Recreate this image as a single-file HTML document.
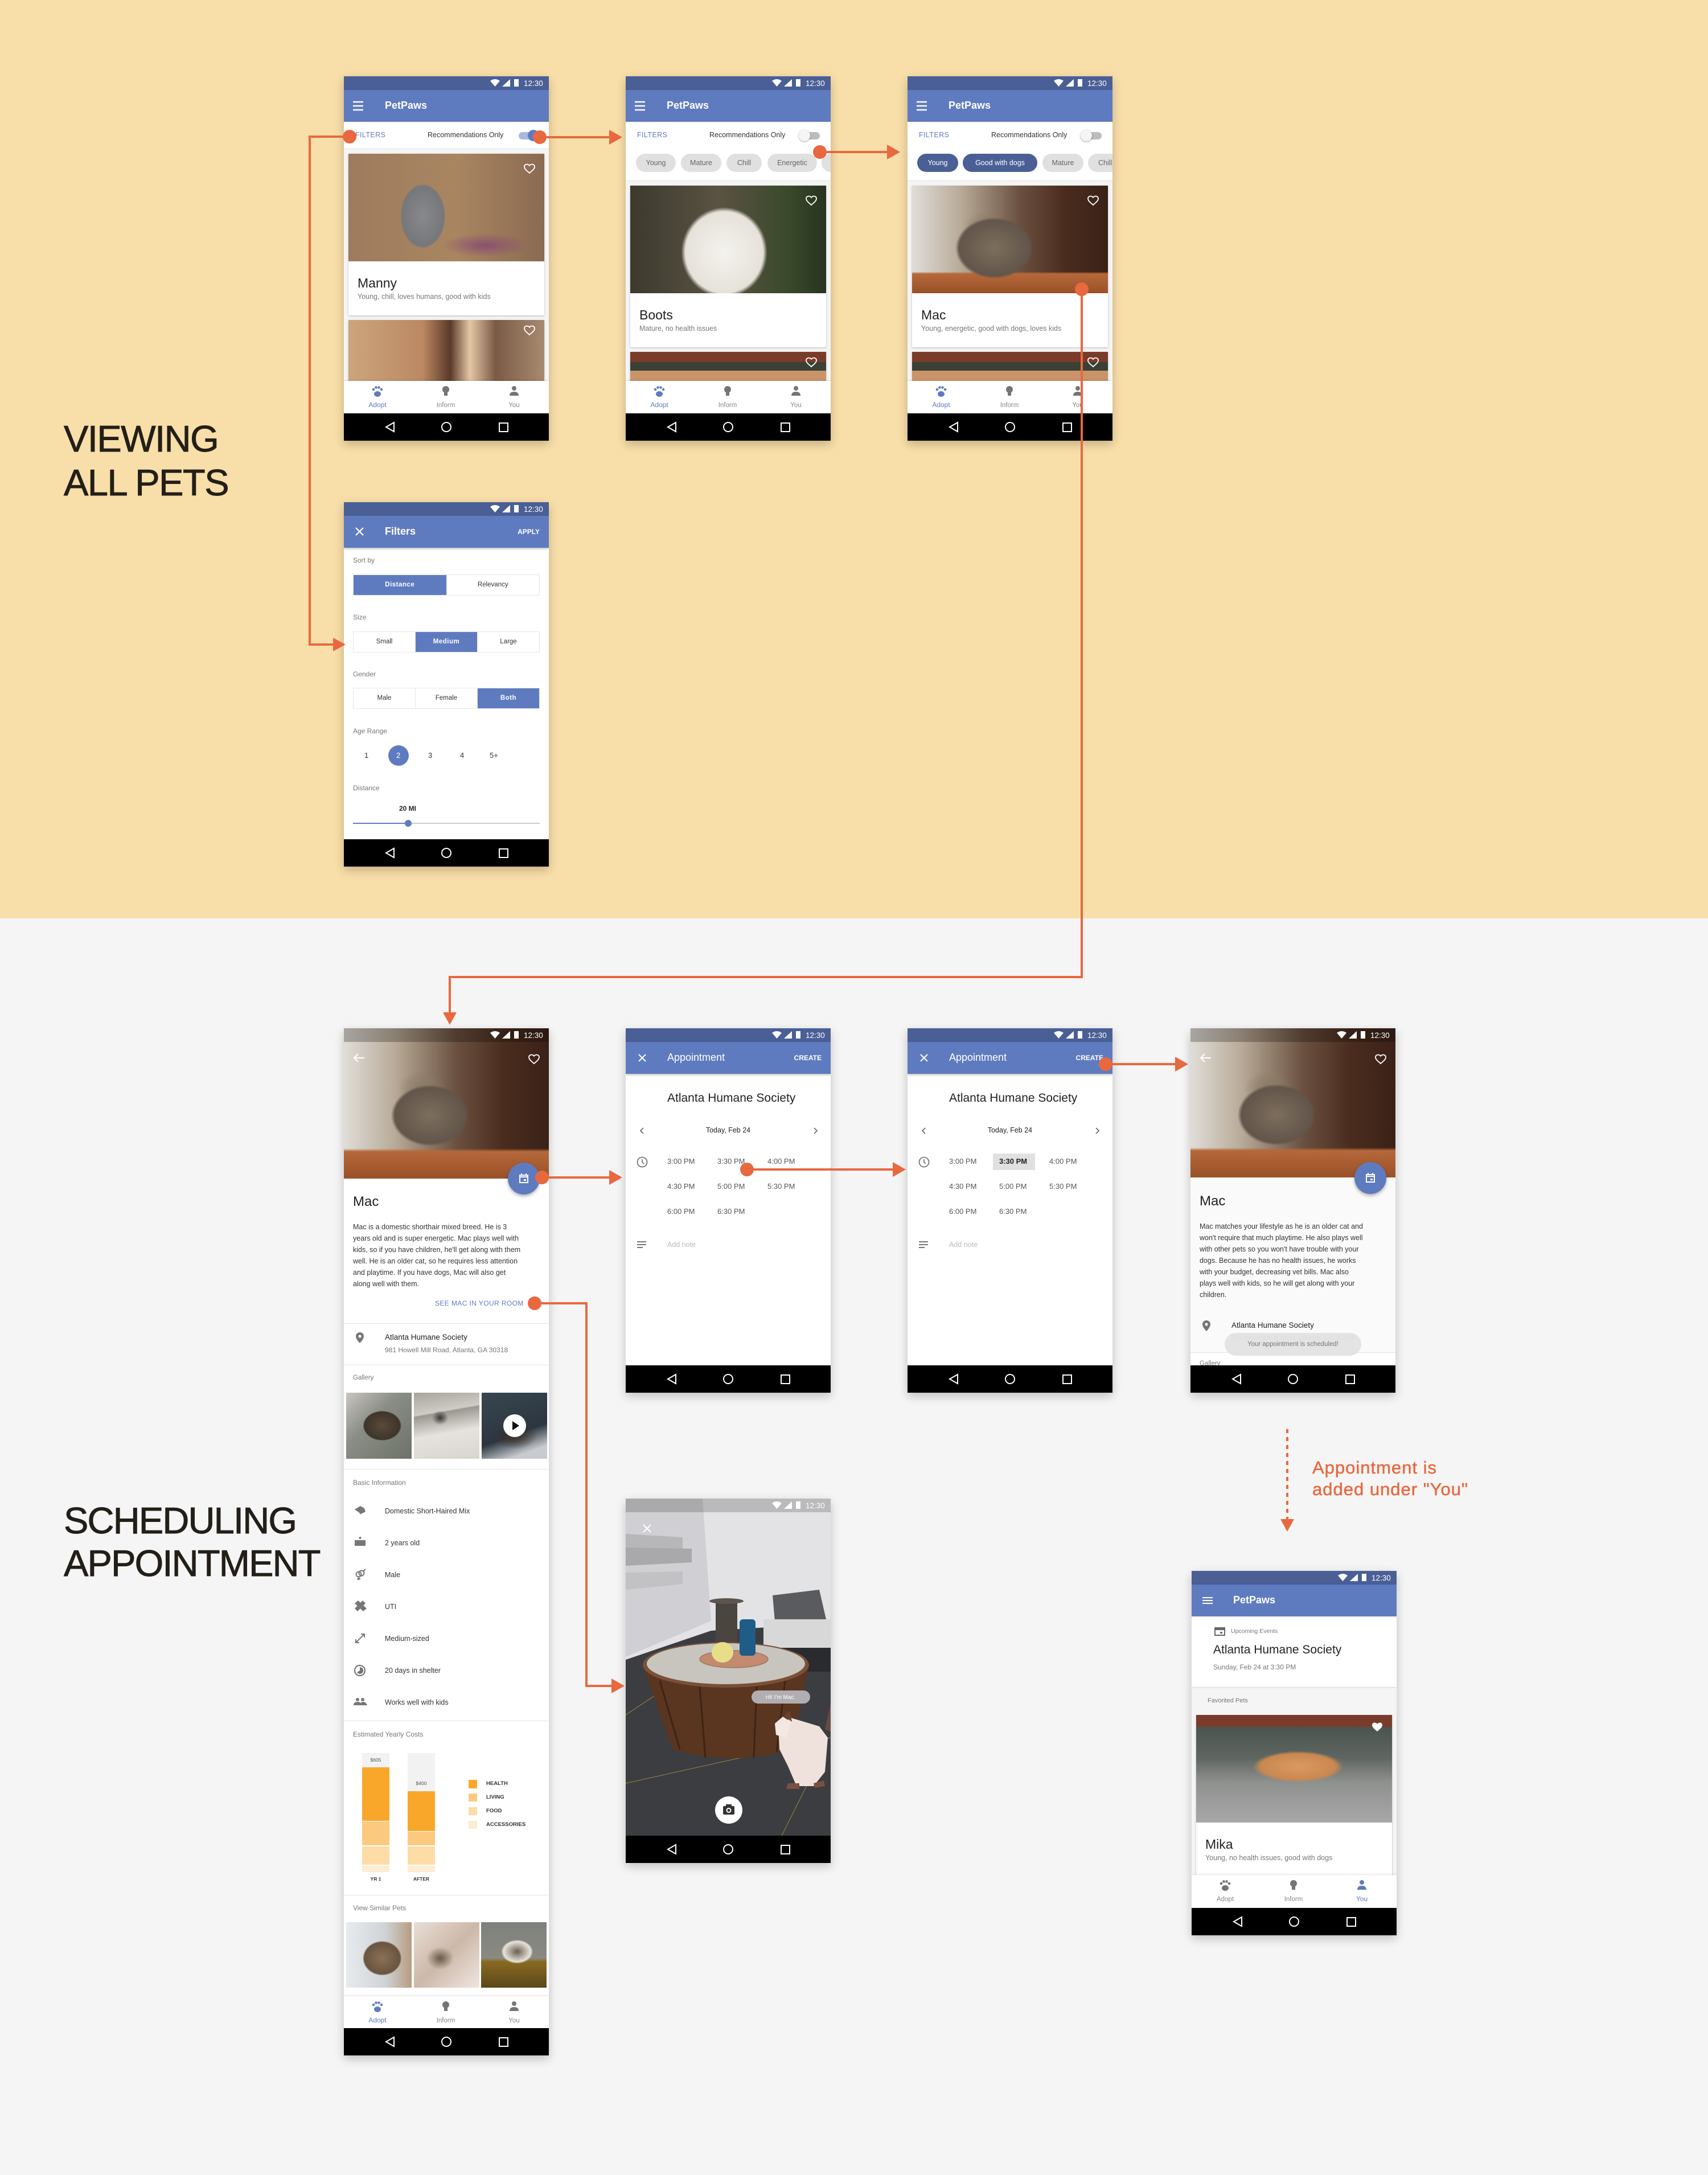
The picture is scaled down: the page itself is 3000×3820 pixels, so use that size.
<!DOCTYPE html>
<html><head><meta charset="utf-8">
<style>
*{box-sizing:border-box;margin:0;padding:0}
body{width:3000px;height:3820px;position:relative;background:#f5f5f5;font-family:"Liberation Sans",sans-serif;overflow:hidden}
.a{position:absolute;white-space:nowrap}
.ph{position:absolute;width:360px;background:#fff;overflow:hidden;box-shadow:0 6px 16px rgba(0,0,0,.22)}
.sb{position:absolute;left:0;top:0;width:360px;height:24px;background:#4a5f96}
.ab{position:absolute;left:0;top:24px;width:360px;height:56px;background:#5f7bc0;box-shadow:0 2px 4px rgba(0,0,0,.25);color:#fff}
.nb{position:absolute;left:0;bottom:0;width:360px;height:48px;background:#000}
.bn{position:absolute;left:0;width:360px;height:56px;background:#fff;box-shadow:0 -1px 3px rgba(0,0,0,.12)}
.card{position:absolute;left:8px;width:344px;background:#fff;box-shadow:0 1px 3px rgba(0,0,0,.25);overflow:hidden}
.chip{position:absolute;top:136px;height:32px;line-height:32px;border-radius:16px;background:#e0e0e0;color:#666;font-size:12.5px;text-align:center}
.chip.on{background:#4a5f96;color:#fff}
.lbl{font-size:12px;color:#777}
.seg{position:absolute;left:16px;width:328px;height:37px;border:1px solid #e6e6e6;display:flex}
.seg div{flex:1;text-align:center;line-height:35px;font-size:11.5px;color:#333;border-right:1px solid #e6e6e6}
.seg div.on{background:#5f7bc0;color:#fff;font-weight:bold;letter-spacing:.5px}
.div{position:absolute;left:0;width:360px;height:1px;background:#e3e3e3}
.mac{background:radial-gradient(ellipse 95px 75px at 42% 58%,#7d6e5c 0%,#62554a 65%,transparent 72%),radial-gradient(ellipse 60px 45px at 38% 40%,#8a7a66,transparent 70%),linear-gradient(0deg,#9a5128 0%,#b5683a 18%,transparent 20%),linear-gradient(90deg,#e0ddd8 0%,#b8aa98 25%,#6a5040 55%,#4a2c1e 78%,#3a2217 100%)}
.t{font-size:12.5px;color:#333}
</style></head><body>
<div class="a" style="left:0;top:0;width:3000px;height:1613px;background:#f8dea8"></div>

<div class="a" style="left:112px;top:732px;font-size:65px;line-height:77px;letter-spacing:-1.5px;color:#231f18;-webkit-text-stroke:.9px #231f18">VIEWING<br>ALL PETS</div>
<div class="a" style="left:112px;top:2633px;font-size:65px;line-height:75px;letter-spacing:-1.8px;color:#231f18;-webkit-text-stroke:.9px #231f18">SCHEDULING<br>APPOINTMENT</div>
<div class="a" style="left:2305px;top:2559px;font-size:31px;line-height:38px;letter-spacing:1px;color:#e8683f;-webkit-text-stroke:.5px #e8683f">Appointment is<br>added under "You"</div>

<!-- P1 -->
<div class="ph" style="left:604px;top:134px;height:640px;background:#f5f5f5">
 <div class="sb"><svg width="360" height="24"><path d="M257 8 Q265.5 2 274 8 L265.5 18Z" fill="#fff"/><path d="M278 18 L292 18 L292 5Z" fill="#fff"/><rect x="299" y="5" width="8" height="13" fill="#fff"/><text x="316" y="17" font-size="13.5" fill="#fff" font-family="Liberation Sans">12:30</text></svg></div>
 <div class="ab"><svg class="a" style="left:0;top:0" width="60" height="56"><path d="M16 21h18M16 28h18M16 35h18" stroke="#fff" stroke-width="2.5"/></svg><div class="a" style="left:72px;top:17px;font-size:18px;font-weight:bold">PetPaws</div></div>
 <div class="a" style="left:0;top:80px;width:360px;height:48px;background:#fff;border-bottom:1px solid #e0e0e0"></div>
 <div class="a" style="left:20px;top:96px;font-size:12.5px;color:#5f7bc0;letter-spacing:.4px">FILTERS</div>
 <div class="a" style="left:147px;top:96px;font-size:12.5px;color:#333">Recommendations Only</div>
 <div class="a" style="left:307px;top:98px;width:32px;height:13px;border-radius:7px;background:#a9b8df"></div>
 <div class="a" style="left:323px;top:94px;width:20px;height:20px;border-radius:10px;background:#5f7bc0"></div>
 <div class="card" style="top:136px;height:284px">
  <div style="height:189px;background:radial-gradient(ellipse 62px 88px at 38% 58%,#88898d 0%,#76777b 60%,transparent 64%),radial-gradient(ellipse 110px 30px at 70% 85%,#8a5070,transparent 70%),linear-gradient(90deg,#9d7b5e,#a98660 55%,#8a6a52)"></div>
  <div class="a" style="left:16px;top:214px;font-size:23px;color:#222">Manny</div>
  <div class="a" style="left:16px;top:244px;font-size:12.5px;color:#777">Young, chill, loves humans, good with kids</div>
  <svg class="a" style="left:306px;top:14px" width="24" height="24" viewBox="0 0 24 24"><path d="M12 20l-1.4-1.3C5.4 14.4 3 12 3 8.8 3 6.2 5 4.5 7.4 4.5c1.7 0 3.5.9 4.6 2.3 1.1-1.4 2.9-2.3 4.6-2.3C19 4.5 21 6.2 21 8.8c0 3.2-2.4 5.6-7.6 9.9z" fill="none" stroke="#fff" stroke-width="1.8"/></svg>
 </div>
 <div class="card" style="top:428px;height:120px">
  <div style="height:120px;background:linear-gradient(90deg,#cca57c,#bb8862 38%,#5a3a2a 52%,#e4c7a4 62%,#7a5a46 75%,#a88a70)"></div>
  <svg class="a" style="left:306px;top:6px" width="24" height="24" viewBox="0 0 24 24"><path d="M12 20l-1.4-1.3C5.4 14.4 3 12 3 8.8 3 6.2 5 4.5 7.4 4.5c1.7 0 3.5.9 4.6 2.3 1.1-1.4 2.9-2.3 4.6-2.3C19 4.5 21 6.2 21 8.8c0 3.2-2.4 5.6-7.6 9.9z" fill="none" stroke="#fff" stroke-width="1.8"/></svg>
 </div>
 <div class="bn" style="top:535px"><svg width="360" height="56" font-family="Liberation Sans"><g fill="#5f7bc0"><ellipse cx="59" cy="23" rx="6" ry="5"/><circle cx="52" cy="15" r="2.3"/><circle cx="56.5" cy="11.5" r="2.3"/><circle cx="61.5" cy="11.5" r="2.3"/><circle cx="66" cy="15" r="2.3"/></g><text x="59" y="46" text-anchor="middle" font-size="12" fill="#5f7bc0">Adopt</text><g fill="#757575"><circle cx="179" cy="15" r="6"/><rect x="176" y="19" width="6" height="7"/><circle cx="299" cy="13" r="4"/><path d="M291 26q0-7 8-7q8 0 8 7z"/></g><text x="179" y="46" text-anchor="middle" font-size="11.5" fill="#888">Inform</text><text x="299" y="46" text-anchor="middle" font-size="11.5" fill="#888">You</text></svg></div>
 <div class="nb"><svg width="360" height="48"><path d="M88 16L74 24L88 32Z" stroke="#fff" stroke-width="2" fill="none"/><circle cx="180" cy="24" r="8" stroke="#fff" stroke-width="2" fill="none"/><rect x="273" y="17" width="15" height="15" stroke="#fff" stroke-width="2" fill="none"/></svg></div>
</div>

<!-- P2 -->
<div class="ph" style="left:1099px;top:134px;height:640px;background:#f5f5f5">
 <div class="sb"><svg width="360" height="24"><path d="M257 8 Q265.5 2 274 8 L265.5 18Z" fill="#fff"/><path d="M278 18 L292 18 L292 5Z" fill="#fff"/><rect x="299" y="5" width="8" height="13" fill="#fff"/><text x="316" y="17" font-size="13.5" fill="#fff" font-family="Liberation Sans">12:30</text></svg></div>
 <div class="ab"><svg class="a" style="left:0;top:0" width="60" height="56"><path d="M16 21h18M16 28h18M16 35h18" stroke="#fff" stroke-width="2.5"/></svg><div class="a" style="left:72px;top:17px;font-size:18px;font-weight:bold">PetPaws</div></div>
 <div class="a" style="left:0;top:80px;width:360px;height:104px;background:#fff;border-bottom:1px solid #e0e0e0"></div>
 <div class="a" style="left:20px;top:96px;font-size:12.5px;color:#5f7bc0;letter-spacing:.4px">FILTERS</div>
 <div class="a" style="left:147px;top:96px;font-size:12.5px;color:#333">Recommendations Only</div>
 <div class="a" style="left:309px;top:98px;width:32px;height:13px;border-radius:7px;background:#bdbdbd"></div>
 <div class="a" style="left:304px;top:94px;width:20px;height:20px;border-radius:10px;background:#f5f5f5;box-shadow:0 1px 3px rgba(0,0,0,.35)"></div>
 <div class="chip" style="left:18px;width:70px">Young</div>
 <div class="chip" style="left:97px;width:71px">Mature</div>
 <div class="chip" style="left:177px;width:62px">Chill</div>
 <div class="chip" style="left:249px;width:87px">Energetic</div>
 <div class="chip" style="left:344px;width:70px"></div>
 <div class="card" style="top:192px;height:284px">
  <div style="height:189px;background:radial-gradient(ellipse 105px 110px at 48% 62%,#f4f2ee 0%,#e6e2da 65%,transparent 72%),linear-gradient(90deg,#3c3a2e,#5a5242 45%,#3a4a2c 80%,#283420)"></div>
  <div class="a" style="left:16px;top:214px;font-size:23px;color:#222">Boots</div>
  <div class="a" style="left:16px;top:244px;font-size:12.5px;color:#777">Mature, no health issues</div>
  <svg class="a" style="left:306px;top:14px" width="24" height="24" viewBox="0 0 24 24"><path d="M12 20l-1.4-1.3C5.4 14.4 3 12 3 8.8 3 6.2 5 4.5 7.4 4.5c1.7 0 3.5.9 4.6 2.3 1.1-1.4 2.9-2.3 4.6-2.3C19 4.5 21 6.2 21 8.8c0 3.2-2.4 5.6-7.6 9.9z" fill="none" stroke="#fff" stroke-width="1.8"/></svg>
 </div>
 <div class="card" style="top:484px;height:60px">
  <div style="height:60px;background:linear-gradient(180deg,#7a3b2a 0,#7a3b2a 30%,#3a4034 30%,#3a4034 55%,#c9946a 55%)"></div>
  <svg class="a" style="left:306px;top:6px" width="24" height="24" viewBox="0 0 24 24"><path d="M12 20l-1.4-1.3C5.4 14.4 3 12 3 8.8 3 6.2 5 4.5 7.4 4.5c1.7 0 3.5.9 4.6 2.3 1.1-1.4 2.9-2.3 4.6-2.3C19 4.5 21 6.2 21 8.8c0 3.2-2.4 5.6-7.6 9.9z" fill="none" stroke="#fff" stroke-width="1.8"/></svg>
 </div>
 <div class="bn" style="top:535px"><svg width="360" height="56" font-family="Liberation Sans"><g fill="#5f7bc0"><ellipse cx="59" cy="23" rx="6" ry="5"/><circle cx="52" cy="15" r="2.3"/><circle cx="56.5" cy="11.5" r="2.3"/><circle cx="61.5" cy="11.5" r="2.3"/><circle cx="66" cy="15" r="2.3"/></g><text x="59" y="46" text-anchor="middle" font-size="12" fill="#5f7bc0">Adopt</text><g fill="#757575"><circle cx="179" cy="15" r="6"/><rect x="176" y="19" width="6" height="7"/><circle cx="299" cy="13" r="4"/><path d="M291 26q0-7 8-7q8 0 8 7z"/></g><text x="179" y="46" text-anchor="middle" font-size="11.5" fill="#888">Inform</text><text x="299" y="46" text-anchor="middle" font-size="11.5" fill="#888">You</text></svg></div>
 <div class="nb"><svg width="360" height="48"><path d="M88 16L74 24L88 32Z" stroke="#fff" stroke-width="2" fill="none"/><circle cx="180" cy="24" r="8" stroke="#fff" stroke-width="2" fill="none"/><rect x="273" y="17" width="15" height="15" stroke="#fff" stroke-width="2" fill="none"/></svg></div>
</div>

<!-- P3 -->
<div class="ph" style="left:1594px;top:134px;height:640px;background:#f5f5f5">
 <div class="sb"><svg width="360" height="24"><path d="M257 8 Q265.5 2 274 8 L265.5 18Z" fill="#fff"/><path d="M278 18 L292 18 L292 5Z" fill="#fff"/><rect x="299" y="5" width="8" height="13" fill="#fff"/><text x="316" y="17" font-size="13.5" fill="#fff" font-family="Liberation Sans">12:30</text></svg></div>
 <div class="ab"><svg class="a" style="left:0;top:0" width="60" height="56"><path d="M16 21h18M16 28h18M16 35h18" stroke="#fff" stroke-width="2.5"/></svg><div class="a" style="left:72px;top:17px;font-size:18px;font-weight:bold">PetPaws</div></div>
 <div class="a" style="left:0;top:80px;width:360px;height:104px;background:#fff;border-bottom:1px solid #e0e0e0"></div>
 <div class="a" style="left:20px;top:96px;font-size:12.5px;color:#5f7bc0;letter-spacing:.4px">FILTERS</div>
 <div class="a" style="left:147px;top:96px;font-size:12.5px;color:#333">Recommendations Only</div>
 <div class="a" style="left:309px;top:98px;width:32px;height:13px;border-radius:7px;background:#bdbdbd"></div>
 <div class="a" style="left:304px;top:94px;width:20px;height:20px;border-radius:10px;background:#f5f5f5;box-shadow:0 1px 3px rgba(0,0,0,.35)"></div>
 <div class="chip on" style="left:17px;width:72px">Young</div>
 <div class="chip on" style="left:97px;width:131px">Good with dogs</div>
 <div class="chip" style="left:237px;width:72px">Mature</div>
 <div class="chip" style="left:317px;width:62px;text-align:left;padding-left:18px">Chill</div>
 <div class="card" style="top:192px;height:284px">
  <div class="mac" style="height:189px"></div>
  <div class="a" style="left:16px;top:214px;font-size:23px;color:#222">Mac</div>
  <div class="a" style="left:16px;top:244px;font-size:12.5px;color:#777">Young, energetic, good with dogs, loves kids</div>
  <svg class="a" style="left:306px;top:14px" width="24" height="24" viewBox="0 0 24 24"><path d="M12 20l-1.4-1.3C5.4 14.4 3 12 3 8.8 3 6.2 5 4.5 7.4 4.5c1.7 0 3.5.9 4.6 2.3 1.1-1.4 2.9-2.3 4.6-2.3C19 4.5 21 6.2 21 8.8c0 3.2-2.4 5.6-7.6 9.9z" fill="none" stroke="#fff" stroke-width="1.8"/></svg>
 </div>
 <div class="card" style="top:484px;height:60px">
  <div style="height:60px;background:linear-gradient(180deg,#7a3b2a 0,#7a3b2a 30%,#3a4034 30%,#3a4034 55%,#c9946a 55%)"></div>
  <svg class="a" style="left:306px;top:6px" width="24" height="24" viewBox="0 0 24 24"><path d="M12 20l-1.4-1.3C5.4 14.4 3 12 3 8.8 3 6.2 5 4.5 7.4 4.5c1.7 0 3.5.9 4.6 2.3 1.1-1.4 2.9-2.3 4.6-2.3C19 4.5 21 6.2 21 8.8c0 3.2-2.4 5.6-7.6 9.9z" fill="none" stroke="#fff" stroke-width="1.8"/></svg>
 </div>
 <div class="bn" style="top:535px"><svg width="360" height="56" font-family="Liberation Sans"><g fill="#5f7bc0"><ellipse cx="59" cy="23" rx="6" ry="5"/><circle cx="52" cy="15" r="2.3"/><circle cx="56.5" cy="11.5" r="2.3"/><circle cx="61.5" cy="11.5" r="2.3"/><circle cx="66" cy="15" r="2.3"/></g><text x="59" y="46" text-anchor="middle" font-size="12" fill="#5f7bc0">Adopt</text><g fill="#757575"><circle cx="179" cy="15" r="6"/><rect x="176" y="19" width="6" height="7"/><circle cx="299" cy="13" r="4"/><path d="M291 26q0-7 8-7q8 0 8 7z"/></g><text x="179" y="46" text-anchor="middle" font-size="11.5" fill="#888">Inform</text><text x="299" y="46" text-anchor="middle" font-size="11.5" fill="#888">You</text></svg></div>
 <div class="nb"><svg width="360" height="48"><path d="M88 16L74 24L88 32Z" stroke="#fff" stroke-width="2" fill="none"/><circle cx="180" cy="24" r="8" stroke="#fff" stroke-width="2" fill="none"/><rect x="273" y="17" width="15" height="15" stroke="#fff" stroke-width="2" fill="none"/></svg></div>
</div>

<!-- Filters -->
<div class="ph" style="left:604px;top:882px;height:640px">
 <div class="sb"><svg width="360" height="24"><path d="M257 8 Q265.5 2 274 8 L265.5 18Z" fill="#fff"/><path d="M278 18 L292 18 L292 5Z" fill="#fff"/><rect x="299" y="5" width="8" height="13" fill="#fff"/><text x="316" y="17" font-size="13.5" fill="#fff" font-family="Liberation Sans">12:30</text></svg></div>
 <div class="ab"><svg class="a" style="left:0;top:0" width="60" height="56"><path d="M21 21l13 13M34 21l-13 13" stroke="#fff" stroke-width="2.2"/></svg><div class="a" style="left:72px;top:17px;font-size:18px;font-weight:bold">Filters</div><div class="a" style="right:16px;top:21px;font-size:12px;font-weight:bold">APPLY</div></div>
 <div class="a lbl" style="left:16px;top:95px">Sort by</div>
 <div class="seg" style="top:127px"><div class="on">Distance</div><div style="border:0">Relevancy</div></div>
 <div class="a lbl" style="left:16px;top:195px">Size</div>
 <div class="seg" style="top:227px"><div>Small</div><div class="on">Medium</div><div style="border:0">Large</div></div>
 <div class="a lbl" style="left:16px;top:295px">Gender</div>
 <div class="seg" style="top:326px"><div>Male</div><div>Female</div><div class="on" style="border:0">Both</div></div>
 <div class="a lbl" style="left:16px;top:395px">Age Range</div>
 <div class="a" style="left:78px;top:427px;width:36px;height:36px;border-radius:18px;background:#5f7bc0"></div>
 <div class="a" style="left:0;top:437px;width:360px;height:16px;font-size:13px;color:#333">
  <span class="a" style="left:36px">1</span><span class="a" style="left:92px;color:#fff">2</span><span class="a" style="left:148px">3</span><span class="a" style="left:204px">4</span><span class="a" style="left:256px">5+</span></div>
 <div class="a lbl" style="left:16px;top:495px">Distance</div>
 <div class="a" style="left:97px;top:531px;font-size:12px;color:#222;font-weight:bold">20 MI</div>
 <div class="a" style="left:16px;top:563px;width:328px;height:2px;background:#ccc"></div>
 <div class="a" style="left:16px;top:563px;width:97px;height:2px;background:#5f7bc0"></div>
 <div class="a" style="left:107px;top:558px;width:12px;height:12px;border-radius:6px;background:#5f7bc0"></div>
 <div class="nb"><svg width="360" height="48"><path d="M88 16L74 24L88 32Z" stroke="#fff" stroke-width="2" fill="none"/><circle cx="180" cy="24" r="8" stroke="#fff" stroke-width="2" fill="none"/><rect x="273" y="17" width="15" height="15" stroke="#fff" stroke-width="2" fill="none"/></svg></div>
</div>

<!-- P4 Mac detail -->
<div class="ph" style="left:604px;top:1806px;height:1804px">
 <div class="a mac" style="left:0;top:0;width:360px;height:264px"></div>
 <div class="sb" style="background:rgba(0,0,0,.25)"><svg width="360" height="24"><path d="M257 8 Q265.5 2 274 8 L265.5 18Z" fill="#fff"/><path d="M278 18 L292 18 L292 5Z" fill="#fff"/><rect x="299" y="5" width="8" height="13" fill="#fff"/><text x="316" y="17" font-size="13.5" fill="#fff" font-family="Liberation Sans">12:30</text></svg></div>
 <svg class="a" style="left:0;top:36px" width="360" height="40"><path d="M36 16H18M25 9l-7 7 7 7" stroke="#fff" stroke-width="2" fill="none"/><path d="M334 26l-1.4-1.3C327.4 20.4 325 18 325 14.8c0-2.6 2-4.3 4.4-4.3 1.7 0 3.5.9 4.6 2.3 1.1-1.4 2.9-2.3 4.6-2.3 2.4 0 4.4 1.7 4.4 4.3 0 3.2-2.4 5.6-7.6 9.9z" fill="none" stroke="#fff" stroke-width="1.8"/></svg>
 <div class="a" style="left:288px;top:236px;width:56px;height:56px;border-radius:28px;background:#5f7bc0;box-shadow:0 3px 6px rgba(0,0,0,.3)"><svg width="56" height="56"><rect x="21" y="22" width="14" height="13" fill="none" stroke="#fff" stroke-width="2"/><path d="M21 25h14M24 19v4M32 19v4" stroke="#fff" stroke-width="2"/><rect x="28" y="29" width="4" height="3" fill="#fff"/></svg></div>
 <div class="a" style="left:16px;top:291px;font-size:24px;color:#222">Mac</div>
 <div class="a t" style="left:16px;top:339px;line-height:20px">Mac is a domestic shorthair mixed breed. He is 3<br>years old and is super energetic. Mac plays well with<br>kids, so if you have children, he'll get along with them<br>well. He is an older cat, so he requires less attention<br>and playtime. If you have dogs, Mac will also get<br>along well with them.</div>
 <div class="a" style="left:160px;top:476px;font-size:12px;color:#5f7bc0;letter-spacing:.4px">SEE MAC IN YOUR ROOM</div>
 <div class="div" style="top:518px"></div>
 <svg class="a" style="left:20px;top:533px" width="16" height="22"><path d="M8 1C4 1 1 4 1 8c0 5 7 12 7 12s7-7 7-12c0-4-3-7-7-7z" fill="#757575"/><circle cx="8" cy="8" r="2.6" fill="#fff"/></svg>
 <div class="a" style="left:72px;top:535px;font-size:13.5px;color:#222">Atlanta Humane Society</div>
 <div class="a" style="left:72px;top:558px;font-size:12px;color:#777">981 Howell Mill Road, Atlanta, GA 30318</div>
 <div class="div" style="top:591px"></div>
 <div class="a" style="left:16px;top:608px;font-size:11.5px;color:#777">Gallery</div>
 <div class="a" style="left:4px;top:640px;width:115px;height:116px;background:radial-gradient(ellipse 45px 35px at 55% 50%,#5a4a3a,#3e342a 70%,transparent 75%),linear-gradient(135deg,#c9c6c0,#8a8e86 40%,#6d7268)"></div>
 <div class="a" style="left:123px;top:640px;width:115px;height:116px;background:radial-gradient(ellipse 18px 16px at 40% 38%,#3a3632,transparent 80%),linear-gradient(170deg,#a7a39d 0,#cfcbc5 30%,#9b9791 32%,#e6e3de 60%,#d8d4ce)"></div>
 <div class="a" style="left:242px;top:640px;width:115px;height:116px;background:radial-gradient(ellipse 50px 30px at 50% 65%,#3a3028,transparent 80%),linear-gradient(160deg,#384650,#2c3640 60%,#c8ccd0 85%)"><div class="a" style="left:38px;top:38px;width:40px;height:40px;border-radius:20px;background:#fff"><svg width="40" height="40"><path d="M16 12L28 20L16 28Z" fill="#111"/></svg></div></div>
 <div class="div" style="top:774px"></div>
 <div class="a" style="left:16px;top:791px;font-size:12px;color:#777">Basic Information</div>
 <svg class="a" style="left:16px;top:835px" width="26" height="370" fill="#777">
  <path d="M3 10l10-6 7 4 2 6-8 4z"/><path d="M12 18l8-4" stroke="#777" stroke-width="1.5"/>
  <g transform="translate(0,56)"><rect x="3" y="8" width="19" height="10"/><circle cx="12.5" cy="4" r="2"/></g>
  <g transform="translate(0,112)" fill="none" stroke="#777" stroke-width="2"><circle cx="10" cy="12" r="4.5"/><circle cx="15" cy="10" r="4.5"/><path d="M10 17v5M7 20h6M18 7l4-4"/></g>
  <g transform="translate(0,168)"><path d="M3 7l6-5 15 14-6 5z"/><path d="M22 7l-5-5-14 14 5 5z"/></g>
  <g transform="translate(0,224)" fill="none" stroke="#777" stroke-width="2"><path d="M5 20L20 5M5 14v6h6M14 5h6v6"/></g>
  <g transform="translate(0,280)"><circle cx="12" cy="13" r="9" fill="none" stroke="#777" stroke-width="2.2"/><path d="M12 7a6 6 0 1 1-5 9l5-3z"/></g>
  <g transform="translate(0,336)"><circle cx="8" cy="8" r="3"/><circle cx="17" cy="8" r="3"/><path d="M1 18q0-6 7-6t7 6zM12 18q1-6 6-6t7 6z"/></g>
 </svg>
 <div class="a t" style="left:72px;top:841px">Domestic Short-Haired Mix</div>
 <div class="a t" style="left:72px;top:897px">2 years old</div>
 <div class="a t" style="left:72px;top:953px">Male</div>
 <div class="a t" style="left:72px;top:1009px">UTI</div>
 <div class="a t" style="left:72px;top:1065px">Medium-sized</div>
 <div class="a t" style="left:72px;top:1121px">20 days in shelter</div>
 <div class="a t" style="left:72px;top:1177px">Works well with kids</div>
 <div class="div" style="top:1216px"></div>
 <div class="a" style="left:16px;top:1233px;font-size:12px;color:#777">Estimated Yearly Costs</div>
 <div class="a" style="left:32px;top:1273px;width:48px;height:25px;background:#f2f2f2;font-size:8.5px;color:#555;text-align:center;line-height:25px">$605</div>
 <div class="a" style="left:32px;top:1298px;width:48px;height:94px;background:#f9a72b"></div>
 <div class="a" style="left:32px;top:1393px;width:48px;height:42px;background:#fcca7e"></div>
 <div class="a" style="left:32px;top:1437px;width:48px;height:32px;background:#fddca6"></div>
 <div class="a" style="left:32px;top:1471px;width:48px;height:11px;background:#feecd3"></div>
 <div class="a" style="left:112px;top:1273px;width:48px;height:67px;background:#f2f2f2;font-size:8.5px;color:#555;text-align:center;padding-top:48px">$400</div>
 <div class="a" style="left:112px;top:1340px;width:48px;height:70px;background:#f9a72b"></div>
 <div class="a" style="left:112px;top:1411px;width:48px;height:24px;background:#fcca7e"></div>
 <div class="a" style="left:112px;top:1437px;width:48px;height:32px;background:#fddca6"></div>
 <div class="a" style="left:112px;top:1471px;width:48px;height:11px;background:#feecd3"></div>
 <div class="a" style="left:32px;top:1489px;width:48px;text-align:center;font-size:8.5px;font-weight:bold;color:#333">YR 1</div>
 <div class="a" style="left:112px;top:1489px;width:48px;text-align:center;font-size:8.5px;font-weight:bold;color:#333">AFTER</div>
 <div class="a" style="left:219px;top:1320px;width:15px;height:15px;background:#f9a72b"></div>
 <div class="a" style="left:219px;top:1344px;width:15px;height:14px;background:#fcca7e"></div>
 <div class="a" style="left:219px;top:1368px;width:15px;height:14px;background:#fddca6"></div>
 <div class="a" style="left:219px;top:1392px;width:15px;height:14px;background:#feecd3"></div>
 <div class="a" style="left:250px;top:1315px;font-size:9.5px;font-weight:bold;color:#333;line-height:24px">HEALTH<br>LIVING<br>FOOD<br>ACCESSORIES</div>
 <div class="div" style="top:1522px"></div>
 <div class="a" style="left:16px;top:1538px;font-size:12px;color:#777">View Similar Pets</div>
 <div class="a" style="left:4px;top:1570px;width:115px;height:115px;background:radial-gradient(ellipse 45px 40px at 55% 55%,#8a7055,#6a5440 70%,transparent 76%),linear-gradient(90deg,#e8ebee,#cfd3d6 60%,#b89c80)"></div>
 <div class="a" style="left:123px;top:1570px;width:115px;height:115px;background:radial-gradient(ellipse 30px 25px at 40% 55%,#6a5a48,transparent 80%),linear-gradient(135deg,#e8ded6,#cdb8a8 50%,#efe6e0)"></div>
 <div class="a" style="left:241px;top:1570px;width:115px;height:115px;background:radial-gradient(ellipse 40px 30px at 55% 45%,#6a6050,#e8e4dc 60%,transparent 70%),linear-gradient(180deg,#7e807c 0,#8a8a82 55%,#8a6a22 60%,#5a4818)"></div>
 <div class="bn" style="top:1700px"><svg width="360" height="56" font-family="Liberation Sans"><g fill="#5f7bc0"><ellipse cx="59" cy="23" rx="6" ry="5"/><circle cx="52" cy="15" r="2.3"/><circle cx="56.5" cy="11.5" r="2.3"/><circle cx="61.5" cy="11.5" r="2.3"/><circle cx="66" cy="15" r="2.3"/></g><text x="59" y="46" text-anchor="middle" font-size="12" fill="#5f7bc0">Adopt</text><g fill="#757575"><circle cx="179" cy="15" r="6"/><rect x="176" y="19" width="6" height="7"/><circle cx="299" cy="13" r="4"/><path d="M291 26q0-7 8-7q8 0 8 7z"/></g><text x="179" y="46" text-anchor="middle" font-size="11.5" fill="#888">Inform</text><text x="299" y="46" text-anchor="middle" font-size="11.5" fill="#888">You</text></svg></div>
 <div class="nb"><svg width="360" height="48"><path d="M88 16L74 24L88 32Z" stroke="#fff" stroke-width="2" fill="none"/><circle cx="180" cy="24" r="8" stroke="#fff" stroke-width="2" fill="none"/><rect x="273" y="17" width="15" height="15" stroke="#fff" stroke-width="2" fill="none"/></svg></div>
</div>

<!-- P5 / P6 Appointment -->
<div class="ph" style="left:1099px;top:1806px;height:640px">
 <div class="sb"><svg width="360" height="24"><path d="M257 8 Q265.5 2 274 8 L265.5 18Z" fill="#fff"/><path d="M278 18 L292 18 L292 5Z" fill="#fff"/><rect x="299" y="5" width="8" height="13" fill="#fff"/><text x="316" y="17" font-size="13.5" fill="#fff" font-family="Liberation Sans">12:30</text></svg></div>
 <div class="ab"><svg class="a" style="left:0;top:0" width="60" height="56"><path d="M23 22l12 12M35 22l-12 12" stroke="#fff" stroke-width="2"/></svg><div class="a" style="left:73px;top:17px;font-size:18px">Appointment</div><div class="a" style="right:16px;top:21px;font-size:12px;font-weight:bold">CREATE</div></div>
 <div class="a" style="left:73px;top:111px;font-size:21px;color:#222">Atlanta Humane Society</div>
 <svg class="a" style="left:0;top:170px" width="360" height="20"><path d="M31 5l-5 5 5 5M331 5l5 5-5 5" stroke="#555" stroke-width="1.5" fill="none"/></svg>
 <div class="a" style="left:0;width:360px;text-align:center;top:172px;font-size:12.5px;color:#222">Today, Feb 24</div>
 <svg class="a" style="left:18px;top:224px" width="22" height="22"><circle cx="11" cy="11" r="8.5" fill="none" stroke="#777" stroke-width="1.8"/><path d="M11 6v5l3 3" stroke="#777" stroke-width="1.8" fill="none"/></svg>
 <svg class="a" style="left:20px;top:373px" width="20" height="16"><path d="M0 2h16M0 7h16M0 12h10" stroke="#777" stroke-width="2"/></svg>
 <div class="a" style="left:73px;top:212px;font-size:13px;color:#555;line-height:44px">3:00 PM<br>4:30 PM<br>6:00 PM</div>
 <div class="a" style="left:161px;top:212px;font-size:13px;color:#555;line-height:44px">3:30 PM<br>5:00 PM<br>6:30 PM</div>
 <div class="a" style="left:249px;top:212px;font-size:13px;color:#555;line-height:44px">4:00 PM<br>5:30 PM</div>
 <div class="a" style="left:73px;top:373px;font-size:12.5px;color:#bbb">Add note</div>
 <div class="nb"><svg width="360" height="48"><path d="M88 16L74 24L88 32Z" stroke="#fff" stroke-width="2" fill="none"/><circle cx="180" cy="24" r="8" stroke="#fff" stroke-width="2" fill="none"/><rect x="273" y="17" width="15" height="15" stroke="#fff" stroke-width="2" fill="none"/></svg></div>
</div>
<div class="ph" style="left:1594px;top:1806px;height:640px">
 <div class="sb"><svg width="360" height="24"><path d="M257 8 Q265.5 2 274 8 L265.5 18Z" fill="#fff"/><path d="M278 18 L292 18 L292 5Z" fill="#fff"/><rect x="299" y="5" width="8" height="13" fill="#fff"/><text x="316" y="17" font-size="13.5" fill="#fff" font-family="Liberation Sans">12:30</text></svg></div>
 <div class="ab"><svg class="a" style="left:0;top:0" width="60" height="56"><path d="M23 22l12 12M35 22l-12 12" stroke="#fff" stroke-width="2"/></svg><div class="a" style="left:73px;top:17px;font-size:18px">Appointment</div><div class="a" style="right:16px;top:21px;font-size:12px;font-weight:bold">CREATE</div></div>
 <div class="a" style="left:73px;top:111px;font-size:21px;color:#222">Atlanta Humane Society</div>
 <svg class="a" style="left:0;top:170px" width="360" height="20"><path d="M31 5l-5 5 5 5M331 5l5 5-5 5" stroke="#555" stroke-width="1.5" fill="none"/></svg>
 <div class="a" style="left:0;width:360px;text-align:center;top:172px;font-size:12.5px;color:#222">Today, Feb 24</div>
 <div class="a" style="left:150px;top:220px;width:74px;height:29px;background:#e0e0e0"></div>
 <svg class="a" style="left:18px;top:224px" width="22" height="22"><circle cx="11" cy="11" r="8.5" fill="none" stroke="#777" stroke-width="1.8"/><path d="M11 6v5l3 3" stroke="#777" stroke-width="1.8" fill="none"/></svg>
 <svg class="a" style="left:20px;top:373px" width="20" height="16"><path d="M0 2h16M0 7h16M0 12h10" stroke="#777" stroke-width="2"/></svg>
 <div class="a" style="left:73px;top:212px;font-size:13px;color:#555;line-height:44px">3:00 PM<br>4:30 PM<br>6:00 PM</div>
 <div class="a" style="left:161px;top:212px;font-size:13px;color:#555;line-height:44px"><b style="color:#222">3:30 PM</b><br>5:00 PM<br>6:30 PM</div>
 <div class="a" style="left:249px;top:212px;font-size:13px;color:#555;line-height:44px">4:00 PM<br>5:30 PM</div>
 <div class="a" style="left:73px;top:373px;font-size:12.5px;color:#bbb">Add note</div>
 <div class="nb"><svg width="360" height="48"><path d="M88 16L74 24L88 32Z" stroke="#fff" stroke-width="2" fill="none"/><circle cx="180" cy="24" r="8" stroke="#fff" stroke-width="2" fill="none"/><rect x="273" y="17" width="15" height="15" stroke="#fff" stroke-width="2" fill="none"/></svg></div>
</div>

<!-- P7 Mac scheduled -->
<div class="ph" style="left:2091px;top:1806px;height:640px;background:#fafafa">
 <div class="a mac" style="left:0;top:0;width:360px;height:262px"></div>
 <div class="sb" style="background:rgba(0,0,0,.25)"><svg width="360" height="24"><path d="M257 8 Q265.5 2 274 8 L265.5 18Z" fill="#fff"/><path d="M278 18 L292 18 L292 5Z" fill="#fff"/><rect x="299" y="5" width="8" height="13" fill="#fff"/><text x="316" y="17" font-size="13.5" fill="#fff" font-family="Liberation Sans">12:30</text></svg></div>
 <svg class="a" style="left:0;top:36px" width="360" height="40"><path d="M36 16H18M25 9l-7 7 7 7" stroke="#fff" stroke-width="2" fill="none"/><path d="M334 26l-1.4-1.3C327.4 20.4 325 18 325 14.8c0-2.6 2-4.3 4.4-4.3 1.7 0 3.5.9 4.6 2.3 1.1-1.4 2.9-2.3 4.6-2.3 2.4 0 4.4 1.7 4.4 4.3 0 3.2-2.4 5.6-7.6 9.9z" fill="none" stroke="#fff" stroke-width="1.8"/></svg>
 <div class="a" style="left:288px;top:235px;width:56px;height:56px;border-radius:28px;background:#5f7bc0;box-shadow:0 3px 6px rgba(0,0,0,.3)"><svg width="56" height="56"><rect x="21" y="22" width="14" height="13" fill="none" stroke="#fff" stroke-width="2"/><path d="M21 25h14M24 19v4M32 19v4" stroke="#fff" stroke-width="2"/><rect x="28" y="29" width="4" height="3" fill="#fff"/></svg></div>
 <div class="a" style="left:16px;top:290px;font-size:24px;color:#222">Mac</div>
 <div class="a t" style="left:16px;top:338px;line-height:20px">Mac matches your lifestyle as he is an older cat and<br>won't require that much playtime. He also plays well<br>with other pets so you won't have trouble with your<br>dogs. Because he has no health issues, he works<br>with your budget, decreasing vet bills. Mac also<br>plays well with kids, so he will get along with your<br>children.</div>
 <svg class="a" style="left:20px;top:512px" width="16" height="22"><path d="M8 1C4 1 1 4 1 8c0 5 7 12 7 12s7-7 7-12c0-4-3-7-7-7z" fill="#757575"/><circle cx="8" cy="8" r="2.6" fill="#fff"/></svg>
 <div class="a" style="left:72px;top:514px;font-size:13.5px;color:#222">Atlanta Humane Society</div>
 <div class="a" style="left:72px;top:536px;font-size:12px;color:#999">981 Howell Mill Road, Atlanta, GA 30318</div>
 <div class="a" style="left:0;top:569px;width:360px;height:30px;background:#fff;border-top:1px solid #e3e3e3"></div>
 <div class="a" style="left:16px;top:583px;font-size:11.5px;color:#777">Gallery</div>
 <div class="a" style="left:60px;top:535px;width:240px;height:40px;border-radius:20px;background:rgba(226,226,226,.94);text-align:center;line-height:40px;font-size:11.5px;color:#777">Your appointment is scheduled!</div>
 <div class="nb"><svg width="360" height="48"><path d="M88 16L74 24L88 32Z" stroke="#fff" stroke-width="2" fill="none"/><circle cx="180" cy="24" r="8" stroke="#fff" stroke-width="2" fill="none"/><rect x="273" y="17" width="15" height="15" stroke="#fff" stroke-width="2" fill="none"/></svg></div>
</div>

<!-- P8 AR -->
<div class="ph" style="left:1099px;top:2632px;height:640px">
 <svg class="a" style="left:0;top:0" width="360" height="640" font-family="Liberation Sans">
  <rect width="360" height="640" fill="#e3e3e6"/>
  <polygon points="0,0 135,0 150,215 0,278" fill="#d0d0d4"/>
  <polygon points="0,62 100,68 100,100 0,100" fill="#b7b7b9"/>
  <polygon points="0,86 116,88 116,112 0,118" fill="#a9a9ab"/>
  <polygon points="0,130 100,128 100,150 0,160" fill="#c2c2c5"/>
  <polygon points="0,283 150,232 250,226 360,228 360,640 0,640" fill="#3b3d41"/>
  <path d="M0 380 L120 300 M0 500 L360 420 M0 600 L260 640 M250 640 L330 480" stroke="#8a7a40" stroke-width="1.2"/>
  <polygon points="258,170 340,160 352,212 262,216" fill="#5a5b5f"/>
  <rect x="242" y="212" width="118" height="52" fill="#d8d8d8"/>
  <rect x="242" y="262" width="118" height="42" fill="#2a2b2e"/>
  <rect x="158" y="180" width="38" height="80" fill="#4b4540"/>
  <ellipse cx="177" cy="180" rx="30" ry="5" fill="#5c544d"/>
  <path d="M33 300 L320 300 L292 440 Q185 472 82 440 Z" fill="#5a3520"/>
  <path d="M60 320 L95 440 M130 330 L140 455 M230 330 L225 455 M280 320 L265 445" stroke="#3e2414" stroke-width="3"/>
  <ellipse cx="176" cy="292" rx="146" ry="40" fill="#7a5038"/>
  <ellipse cx="176" cy="290" rx="139" ry="36" fill="#c8c5bf"/>
  <ellipse cx="190" cy="282" rx="60" ry="15" fill="#c48a6f" stroke="#9a7a60" stroke-width="1.5"/>
  <ellipse cx="170" cy="270" rx="19" ry="18" fill="#e7de8a"/>
  <rect x="200" y="212" width="28" height="64" rx="6" fill="#1f5c86"/>
  <polygon points="268,400 290,385 340,400 355,420 350,480 330,505 300,505 285,470 270,440" fill="#efe2dc"/>
  <polygon points="262,395 276,383 290,392 282,420 264,415" fill="#f3e8e2"/>
  <polygon points="278,382 288,372 292,392" fill="#6a4030"/>
  <polygon points="350,405 360,360 362,410" fill="#6a4a40"/>
  <polygon points="285,500 305,500 305,510 282,510" fill="#7a5040"/><polygon points="330,500 348,495 350,505 332,508" fill="#7a5040"/>
  <rect x="221" y="337" width="103" height="23" rx="11.5" fill="rgba(190,190,196,.88)"/>
  <text x="272" y="352" text-anchor="middle" font-size="10" fill="#fff">Hi! I'm Mac.</text>
  <circle cx="181" cy="547" r="24" fill="#fff"/>
  <rect x="171" y="540" width="20" height="15" rx="2" fill="#333"/><rect x="176" y="537" width="10" height="4" fill="#333"/><circle cx="181" cy="547.5" r="4.5" fill="#fff"/><circle cx="181" cy="547.5" r="2.5" fill="#333"/>
  <path d="M31 46l13 13M44 46l-13 13" stroke="#fff" stroke-width="2"/>
 </svg>
 <div class="sb" style="background:rgba(0,0,0,.18)"><svg width="360" height="24"><path d="M257 8 Q265.5 2 274 8 L265.5 18Z" fill="#fff"/><path d="M278 18 L292 18 L292 5Z" fill="#fff"/><rect x="299" y="5" width="8" height="13" fill="#fff"/><text x="316" y="17" font-size="13.5" fill="#fff" font-family="Liberation Sans">12:30</text></svg></div>
 <div class="nb"><svg width="360" height="48"><path d="M88 16L74 24L88 32Z" stroke="#fff" stroke-width="2" fill="none"/><circle cx="180" cy="24" r="8" stroke="#fff" stroke-width="2" fill="none"/><rect x="273" y="17" width="15" height="15" stroke="#fff" stroke-width="2" fill="none"/></svg></div>
</div>

<!-- P9 You -->
<div class="ph" style="left:2093px;top:2759px;height:640px;background:#f5f5f5">
 <div class="sb"><svg width="360" height="24"><path d="M257 8 Q265.5 2 274 8 L265.5 18Z" fill="#fff"/><path d="M278 18 L292 18 L292 5Z" fill="#fff"/><rect x="299" y="5" width="8" height="13" fill="#fff"/><text x="316" y="17" font-size="13.5" fill="#fff" font-family="Liberation Sans">12:30</text></svg></div>
 <div class="ab"><svg class="a" style="left:0;top:0" width="60" height="56"><path d="M19 23h18M19 28h18M19 33h18" stroke="#fff" stroke-width="2"/></svg><div class="a" style="left:73px;top:17px;font-size:18px;font-weight:bold">PetPaws</div></div>
 <div class="a" style="left:0;top:80px;width:360px;height:124px;background:#fff;box-shadow:0 1px 2px rgba(0,0,0,.12)"></div>
 <svg class="a" style="left:40px;top:97px" width="20" height="18"><rect x="1" y="3" width="17" height="13" fill="none" stroke="#666" stroke-width="2"/><rect x="1" y="3" width="17" height="4" fill="#666"/><rect x="10" y="10" width="4" height="3" fill="#666"/></svg>
 <div class="a" style="left:69px;top:100px;font-size:10.5px;color:#777">Upcoming Events</div>
 <div class="a" style="left:38px;top:127px;font-size:21px;color:#222">Atlanta Humane Society</div>
 <div class="a" style="left:38px;top:162px;font-size:12px;color:#777">Sunday, Feb 24 at 3:30 PM</div>
 <div class="a" style="left:28px;top:222px;font-size:11px;color:#777">Favorited Pets</div>
 <div class="card" style="top:253px;height:290px">
  <div style="height:189px;background:radial-gradient(ellipse 110px 38px at 52% 48%,#d99a62 0%,#c98850 60%,transparent 72%),linear-gradient(180deg,#7a3b2a 0,#7a3b2a 10%,#4c5450 12%,#5f6662 40%,#8e908e 62%,#a8a8a8)"></div>
  <div class="a" style="left:16px;top:214px;font-size:23px;color:#222">Mika</div>
  <div class="a" style="left:16px;top:244px;font-size:12.5px;color:#777">Young, no health issues, good with dogs</div>
  <svg class="a" style="left:306px;top:9px" width="24" height="24" viewBox="0 0 24 24"><path d="M12 20l-1.4-1.3C5.4 14.4 3 12 3 8.8 3 6.2 5 4.5 7.4 4.5c1.7 0 3.5.9 4.6 2.3 1.1-1.4 2.9-2.3 4.6-2.3C19 4.5 21 6.2 21 8.8c0 3.2-2.4 5.6-7.6 9.9z" fill="#fff"/></svg>
 </div>
 <div class="bn" style="top:534px"><svg width="360" height="58" font-family="Liberation Sans"><g fill="#757575"><ellipse cx="59" cy="23" rx="6" ry="5"/><circle cx="52" cy="15" r="2.3"/><circle cx="56.5" cy="11.5" r="2.3"/><circle cx="61.5" cy="11.5" r="2.3"/><circle cx="66" cy="15" r="2.3"/><circle cx="179" cy="15" r="6"/><rect x="176" y="19" width="6" height="7"/></g><text x="59" y="46" text-anchor="middle" font-size="11.5" fill="#888">Adopt</text><text x="179" y="46" text-anchor="middle" font-size="11.5" fill="#888">Inform</text><g fill="#5f7bc0"><circle cx="299" cy="13" r="4"/><path d="M291 26q0-7 8-7q8 0 8 7z"/></g><text x="299" y="46" text-anchor="middle" font-size="12" fill="#5f7bc0">You</text></svg></div>
 <div class="nb"><svg width="360" height="48"><path d="M88 16L74 24L88 32Z" stroke="#fff" stroke-width="2" fill="none"/><circle cx="180" cy="24" r="8" stroke="#fff" stroke-width="2" fill="none"/><rect x="273" y="17" width="15" height="15" stroke="#fff" stroke-width="2" fill="none"/></svg></div>
</div>

<!-- connectors -->
<svg class="a" style="left:0;top:0;z-index:10" width="3000" height="3820">
 <g stroke="#e8683f" stroke-width="4" fill="none">
  <path d="M614 240H544V1132H590"/>
  <path d="M948 241H1072"/>
  <path d="M1440 267H1560"/>
  <path d="M1900 508V1716H790V1782"/>
  <path d="M952 2068H1072"/>
  <path d="M1312 2054H1570"/>
  <path d="M1942 1869H2066"/>
  <path d="M939 2289H1030V2961H1078"/>
  <path d="M2261 2510V2672" stroke-dasharray="7 7"/>
 </g>
 <g fill="#e8683f">
  <circle cx="614" cy="240" r="12"/><path d="M585 1120L607 1132L585 1144Z"/>
  <circle cx="948" cy="241" r="12"/><path d="M1070 228L1093 241L1070 254Z"/>
  <circle cx="1440" cy="267" r="12"/><path d="M1558 254L1581 267L1558 280Z"/>
  <circle cx="1900" cy="508" r="12"/><path d="M778 1778L790 1800L802 1778Z"/>
  <circle cx="952" cy="2068" r="12"/><path d="M1070 2055L1093 2068L1070 2081Z"/>
  <circle cx="1312" cy="2054" r="12"/><path d="M1568 2041L1591 2054L1568 2067Z"/>
  <circle cx="1942" cy="1869" r="12"/><path d="M2064 1856L2087 1869L2064 1882Z"/>
  <circle cx="939" cy="2289" r="12"/><path d="M1074 2948L1097 2961L1074 2974Z"/>
  <path d="M2249 2668L2261 2690L2273 2668Z"/>
 </g>
</svg>
</body></html>
